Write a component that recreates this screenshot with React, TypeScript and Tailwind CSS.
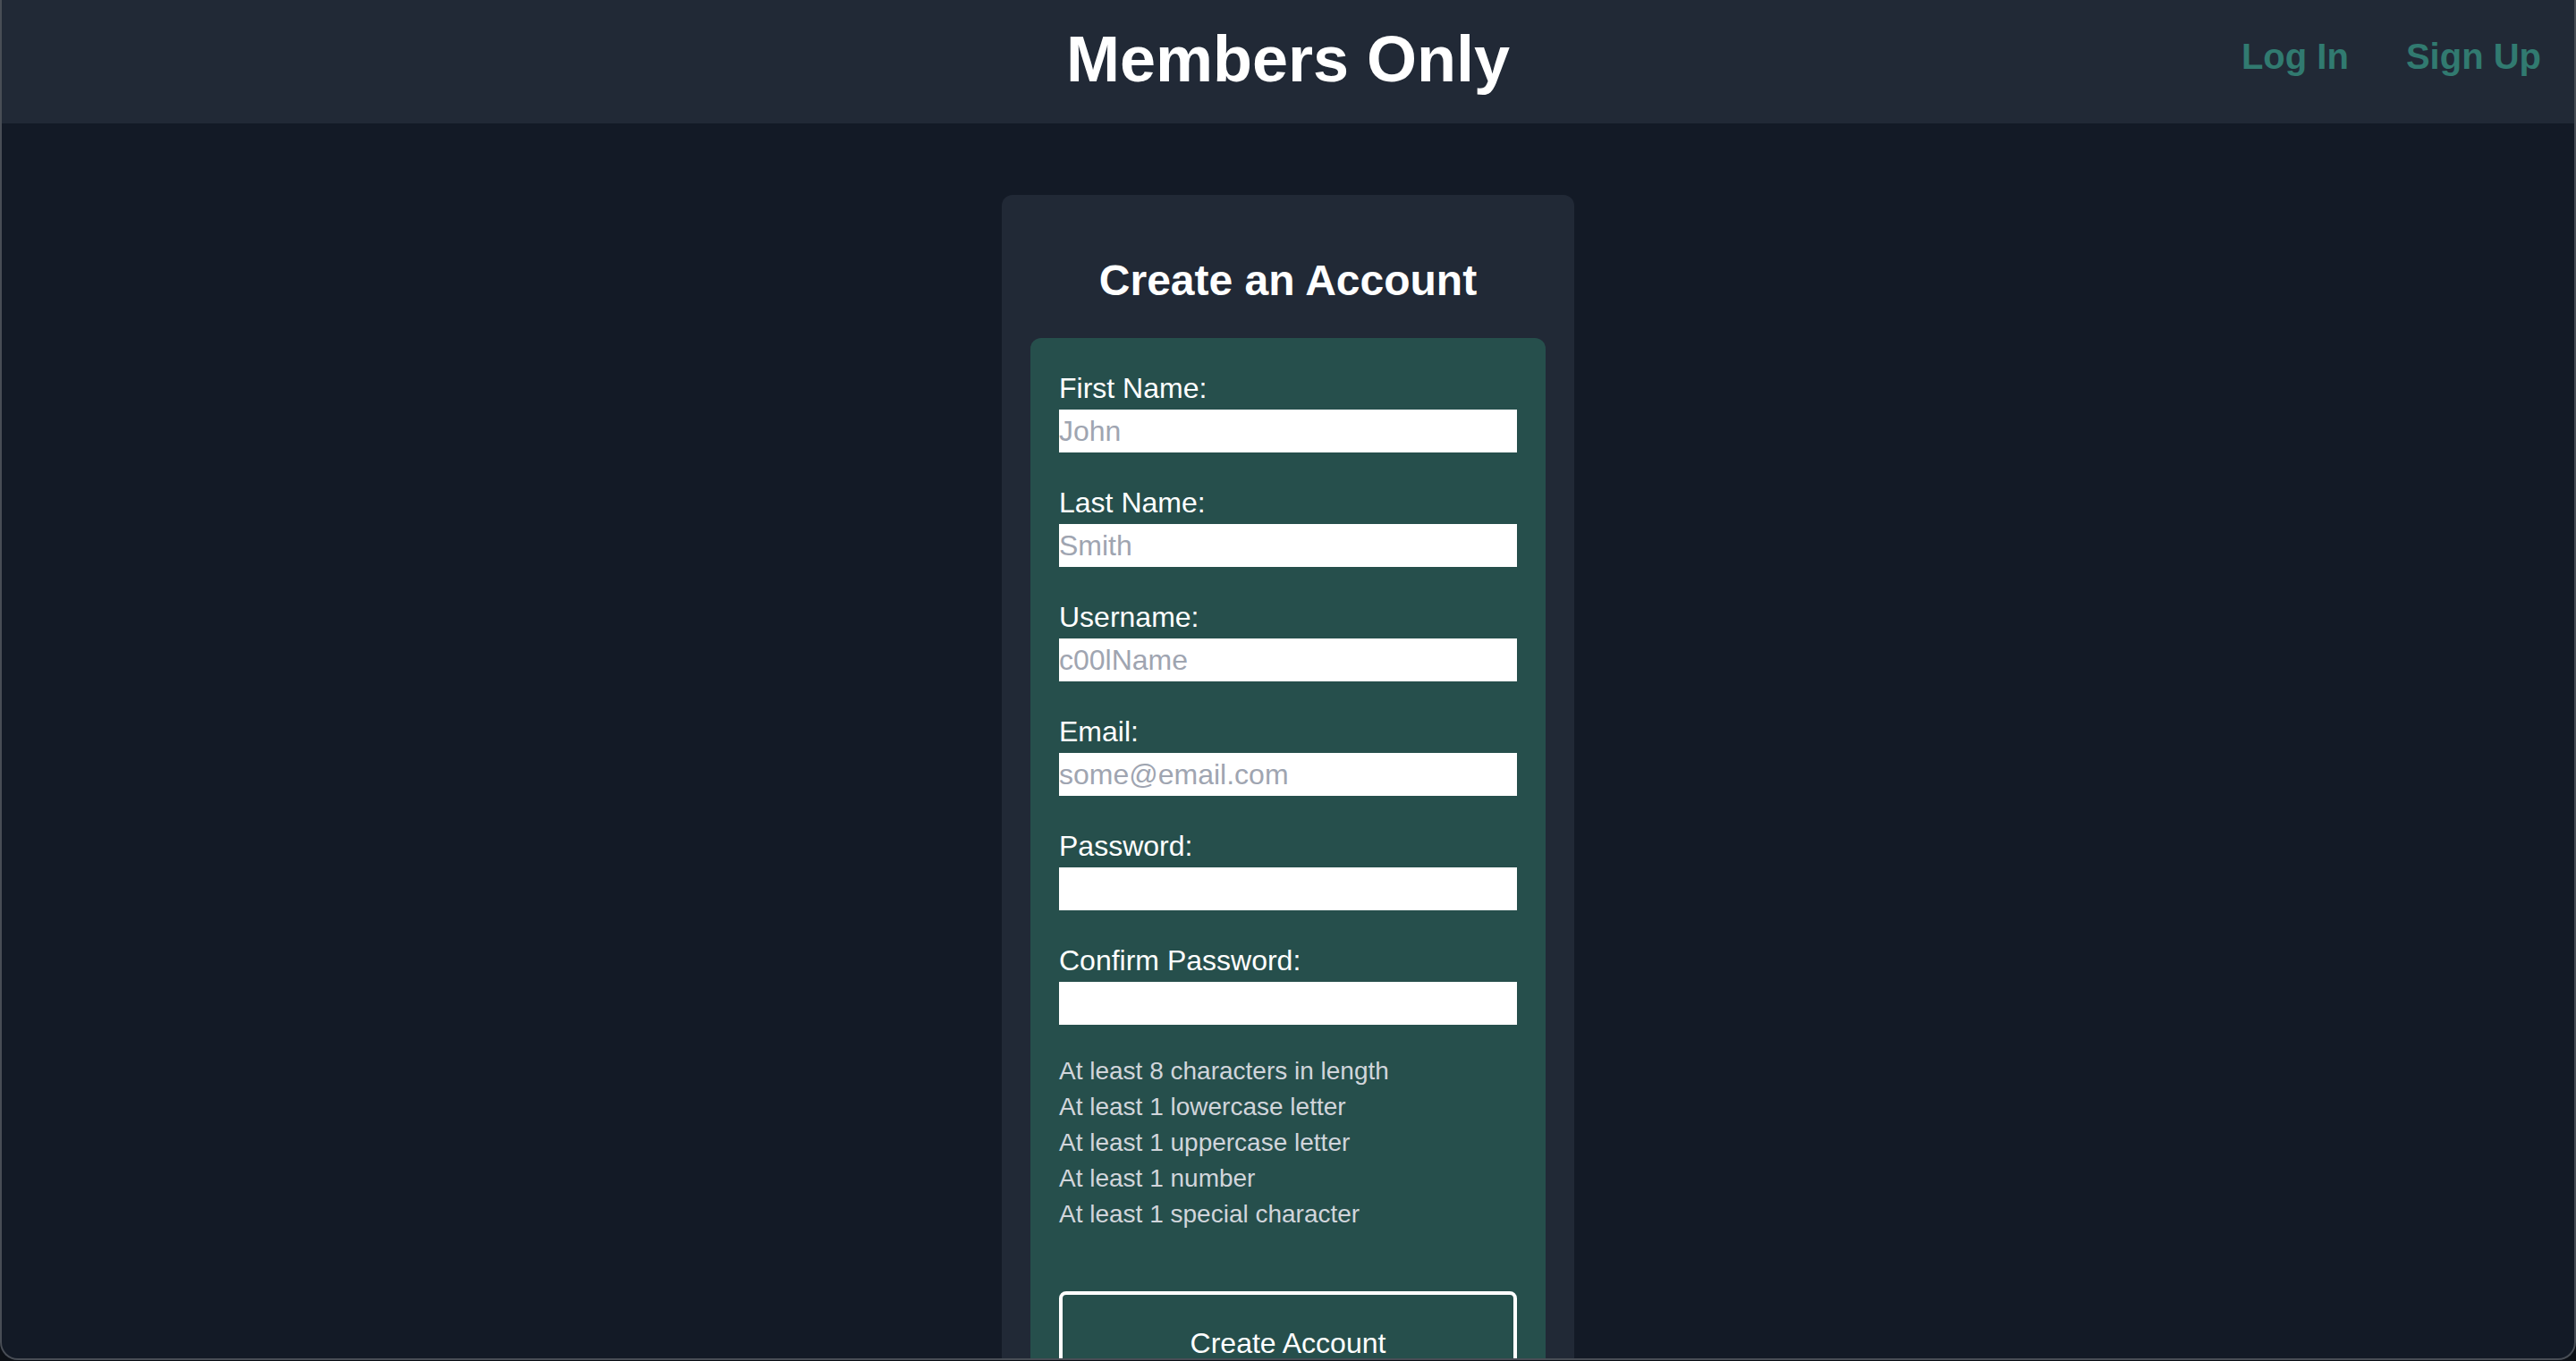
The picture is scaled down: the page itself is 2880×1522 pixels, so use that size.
import { useState } from 'react'

const fields = [
  { id: 'firstName', label: 'First Name:', type: 'text', placeholder: 'John' },
  { id: 'lastName', label: 'Last Name:', type: 'text', placeholder: 'Smith' },
  { id: 'username', label: 'Username:', type: 'text', placeholder: 'c00lName' },
  { id: 'email', label: 'Email:', type: 'email', placeholder: 'some@email.com' },
  { id: 'password', label: 'Password:', type: 'password', placeholder: '' },
  { id: 'confirmPassword', label: 'Confirm Password:', type: 'password', placeholder: '' },
]

const rules = [
  'At least 8 characters in length',
  'At least 1 lowercase letter',
  'At least 1 uppercase letter',
  'At least 1 number',
  'At least 1 special character',
]

function Header() {
  return (
    <header className="grid h-[138px] grid-cols-3 bg-[#212936]">
      <div />
      <h1 className="whitespace-nowrap pt-[26px] text-center text-[72px] font-bold leading-[80px] text-white">Members Only</h1>
      <nav className="flex justify-end gap-16 pr-[37px] pt-[35px] text-[40px] font-bold leading-[56px] text-[#317a70]">
        <a href="#" className="hover:text-[#3f9387]">Log In</a>
        <a href="#" className="hover:text-[#3f9387]">Sign Up</a>
      </nav>
    </header>
  )
}

function SignUpForm() {
  const [values, setValues] = useState<Record<string, string>>({})

  return (
    <form className="rounded-[12px] bg-[#264f4c] p-8" onSubmit={(e) => e.preventDefault()}>
      <div className="flex flex-col gap-8">
        {fields.map((f) => (
          <div key={f.id} className="flex flex-col">
            <label htmlFor={f.id} className="text-[32px] leading-[48px] text-white">{f.label}</label>
            <input
              id={f.id}
              type={f.type}
              placeholder={f.placeholder}
              value={values[f.id] ?? ''}
              onChange={(e) => setValues({ ...values, [f.id]: e.target.value })}
              className="h-[48px] w-full bg-white text-[32px] leading-[48px] text-black outline-none placeholder:text-[#9fa5b1]"
            />
          </div>
        ))}
      </div>
      <ul className="mt-8 text-[28px] leading-[40px] text-[#d1d5db]">
        {rules.map((r) => <li key={r}>{r}</li>)}
      </ul>
      <button type="submit" className="mt-[66px] w-full rounded-[8px] border-4 border-white py-[30px] text-[32px] leading-[48px] text-white">
        Create Account
      </button>
    </form>
  )
}

export default function App() {
  return (
    <div className="h-[1522px] overflow-hidden bg-[#0c1016] font-['Liberation_Sans',Arial,sans-serif]">
      <div className="h-[1521px] overflow-hidden rounded-b-[20px] border-x-2 border-b-2 border-[#484d55] bg-[#131a26]">
        <Header />
        <main className="flex justify-center pt-[80px]">
          <div className="w-[640px] rounded-[12px] bg-[#212936] px-8 pt-[64px] pb-8">
            <h2 className="mb-[32px] text-center text-[48px] font-bold leading-[64px] text-white">Create an Account</h2>
            <SignUpForm />
          </div>
        </main>
      </div>
    </div>
  )
}
